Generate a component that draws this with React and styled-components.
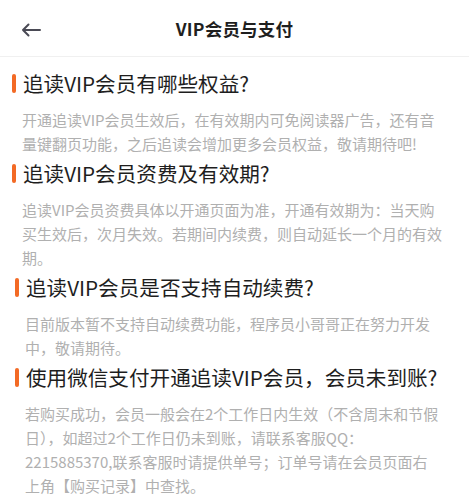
import React from 'react';
import styled, { createGlobalStyle } from 'styled-components';

const GlobalStyle = createGlobalStyle`
  body {
    margin: 0;
    background: #fff;
    font-family: "Noto Sans CJK SC", "Noto Sans", sans-serif;
  }
`;

const Page = styled.div`
  width: 469px;
  height: 500px;
  overflow: hidden;
  background: #fff;
`;

const Header = styled.header`
  height: 56px;
  display: flex;
  align-items: center;
  justify-content: center;
  position: relative;
  border-bottom: 1px solid #f0f0f0;
`;

const BackButton = styled.button`
  position: absolute;
  left: 18px;
  top: 17px;
  width: 26px;
  height: 26px;
  padding: 0;
  border: none;
  background: none;
  display: flex;
  align-items: center;
  justify-content: center;
`;

const Title = styled.h1`
  margin: 0;
  font-size: 17.5px;
  font-weight: 700;
  color: #1f1f1f;
  letter-spacing: 0.2px;
`;

const Content = styled.main`
  padding: 12px 0 0;
`;

const Section = styled.section`
  padding-left: ${(p) => (p.$shift ? 3 : 0)}px;
  margin-bottom: 3px;
`;

const Question = styled.h2`
  margin: 0;
  display: flex;
  align-items: center;
  gap: 7px;
  padding-left: 12px;
  font-size: 20.6px;
  line-height: 28px;
  font-weight: 400;
  color: #1e1e1e;

  &::before {
    content: '';
    width: 4px;
    height: 19px;
    border-radius: 2px;
    background: #f36a25;
    flex-shrink: 0;
  }
`;

const Answer = styled.p`
  margin: 11px 0 0 22px;
  font-size: 15px;
  line-height: 24px;
  color: #b0b0b0;
`;

const Line = styled.span`
  display: block;
  white-space: nowrap;
`;

const faqs = [
  {
    q: '追读VIP会员有哪些权益?',
    a: [
      '开通追读VIP会员生效后，在有效期内可免阅读器广告，还有音',
      '量键翻页功能，之后追读会增加更多会员权益，敬请期待吧!',
    ],
  },
  {
    q: '追读VIP会员资费及有效期?',
    a: [
      '追读VIP会员资费具体以开通页面为准，开通有效期为：当天购',
      '买生效后，次月失效。若期间内续费，则自动延长一个月的有效',
      '期。',
    ],
  },
  {
    q: '追读VIP会员是否支持自动续费?',
    a: [
      '目前版本暂不支持自动续费功能，程序员小哥哥正在努力开发',
      '中，敬请期待。',
    ],
    shift: true,
  },
  {
    q: '使用微信支付开通追读VIP会员，会员未到账?',
    a: [
      '若购买成功，会员一般会在2个工作日内生效（不含周末和节假',
      '日），如超过2个工作日仍未到账，请联系客服QQ：',
      '2215885370,联系客服时请提供单号；订单号请在会员页面右',
      '上角【购买记录】中查找。',
    ],
    shift: true,
  },
];

export default function App() {
  return (
    <Page>
      <GlobalStyle />
      <Header>
        <BackButton aria-label="返回">
          <svg width="20" height="14" viewBox="0 0 20 14" fill="none">
            <path d="M19 7H2M7.5 1.5L2 7l5.5 5.5" stroke="#4a4a55" strokeWidth="2" strokeLinecap="round" strokeLinejoin="round" />
          </svg>
        </BackButton>
        <Title>VIP会员与支付</Title>
      </Header>
      <Content>
        {faqs.map((f) => (
          <Section key={f.q} $shift={f.shift}>
            <Question>{f.q}</Question>
            <Answer>
              {f.a.map((line) => (
                <Line key={line}>{line}</Line>
              ))}
            </Answer>
          </Section>
        ))}
      </Content>
    </Page>
  );
}
